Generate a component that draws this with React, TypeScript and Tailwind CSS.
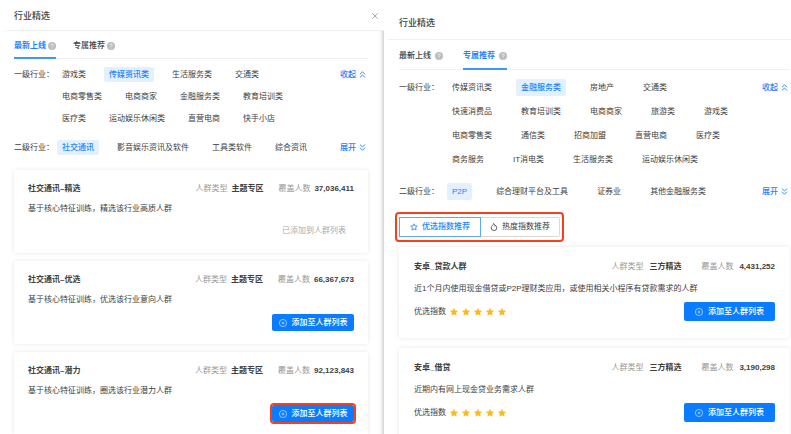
import React from 'react';
import { ChevronsDown, ChevronsUp, X } from 'lucide-react';

type Row = string[];

const newCards = [
  { name: '社交通讯–精选', desc: '基于核心特征训练，精选该行业高质人群', count: '37,036,411', added: true },
  { name: '社交通讯–优选', desc: '基于核心特征训练，优选该行业意向人群', count: '66,367,673' },
  { name: '社交通讯–潜力', desc: '基于核心特征训练，圈选该行业潜力人群', count: '92,123,843', marked: true },
];

const exclusiveCards = [
  { name: '安卓_贷款人群', desc: '近1个月内使用现金借贷或P2P理财类应用，或使用相关小程序有贷款需求的人群', count: '4,431,252' },
  { name: '安卓_借贷', desc: '近期内有网上现金贷业务需求人群', count: '3,190,298' },
];

const HelpIcon = () => (
  <svg viewBox="0 0 16 16" className="size-2 shrink-0" aria-hidden="true">
    <circle cx="8" cy="8" r="8" fill="#bdbdbd" />
    <path d="M5.7 6.4a2.3 2.3 0 1 1 3.4 2c-.8.4-1.1.8-1.1 1.5" fill="none" stroke="#fff" strokeWidth="1.4" />
    <circle cx="8" cy="12" r="0.9" fill="#fff" />
  </svg>
);

const AddIcon = () => (
  <svg viewBox="0 0 16 16" className="size-2 shrink-0" fill="none" stroke="#fff" aria-hidden="true">
    <circle cx="8" cy="8" r="7.2" strokeWidth="1.1" />
    <path d="M5.2 8h5.6M8 5.2v5.6" strokeWidth="1.1" />
  </svg>
);

const StarIcon = () => (
  <svg viewBox="0 0 16 16" className="size-2" fill="#fbb91c" stroke="#fbb91c" strokeLinejoin="round" aria-hidden="true">
    <path d="M8 .9l2.2 4.500 5 .6-3.700 3.400 1 5L8 12l-4.500 2.400 1-5L.8 6l5-.6z" />
  </svg>
);

const Tab = ({ label, active, wide }: { label: string; active?: boolean; wide?: boolean }) => (
  <button
    role="tab"
    aria-selected={!!active}
    className={`-mb-px flex items-center border-b-2 pt-[3px] ${wide ? 'h-[30px] gap-1' : 'h-[28px] gap-[2px]'} ${
      active ? 'border-[#3d97ff] font-bold text-[#1a84ff]' : 'border-transparent font-medium'
    }`}
  >
    {label}
    <HelpIcon />
  </button>
);

type FilterProps = { label: string; rows: Row[]; active: string; open?: boolean; wide?: boolean };

const Filter = ({ label, rows, active, open, wide }: FilterProps) => (
  <div className="flex items-start">
    <span className={`shrink-0 ${wide ? 'w-12 leading-[17px]' : 'w-[43px] leading-[15px]'}`}>{label}：</span>
    <div className="flex flex-1 flex-col gap-[7px]">
      {rows.map((row) => (
        <div key={row[0]} className={`flex ${wide ? 'gap-[19px]' : 'gap-[13px]'}`}>
          {row.map((item) => (
            <button
              key={item}
              className={`rounded-[2px] px-[5px] whitespace-nowrap ${wide ? 'h-[17px]' : 'h-[15px]'} ${
                item === active ? 'bg-[#e3f1ff] font-medium text-[#1a84ff]' : ''
              }`}
            >
              {item}
            </button>
          ))}
        </div>
      ))}
    </div>
    <button className={`flex shrink-0 items-center gap-px font-medium text-[#1a84ff] ${wide ? 'h-[17px]' : 'h-[15px]'}`}>
      {open ? '收起' : '展开'}
      {open ? <ChevronsUp size={11} strokeWidth={2} /> : <ChevronsDown size={11} strokeWidth={2} />}
    </button>
  </div>
);

const AddButton = ({ wide }: { wide?: boolean }) => (
  <button
    className={`flex items-center justify-center gap-[5px] rounded-[2px] bg-[#0a7cff] font-medium text-white ${
      wide ? 'h-[19px] w-[91px]' : 'h-[17px] w-[82px]'
    }`}
  >
    <AddIcon />
    添加至人群列表
  </button>
);

const Meta = ({ type, count, wide }: { type: string; count: string; wide?: boolean }) => (
  <dl className="flex whitespace-nowrap">
    <dt className={`text-[#999] ${wide ? 'mr-[6px]' : 'mr-1'}`}>人群类型</dt>
    <dd className={`font-bold ${wide ? 'mr-5' : 'mr-[15px]'}`}>{type}</dd>
    <dt className={`text-[#999] ${wide ? 'mr-[6px]' : 'mr-1'}`}>覆盖人数</dt>
    <dd className="font-bold">{count}</dd>
  </dl>
);

const App = () => {
  return (
    <main className="grid h-screen grid-cols-[384fr_407fr] overflow-hidden bg-white font-['Liberation_Sans','Noto_Sans_CJK_SC',sans-serif] text-[8px] leading-3 text-[#404040]">
      <section className="flex min-w-0 flex-col">
        <header className="ml-[7px] flex h-[31px] shrink-0 items-center justify-between border-b border-[#f0f0f0] pt-px pr-1 pl-[7px]">
          <h2 className="text-[9px] font-medium">行业精选</h2>
          <button aria-label="关闭" className="text-[#999]">
            <X size={10} strokeWidth={2} />
          </button>
        </header>
        <div className="flex-1 pr-4 pl-[14px] shadow-[inset_-4px_0_4px_-3px_rgba(0,0,0,0.25)]">
          <div role="tablist" className="flex gap-[17px] border-b border-[#f0f0f0]">
            <Tab label="最新上线" active />
            <Tab label="专属推荐" />
          </div>
          <div className="flex flex-col gap-[14px] pt-2">
            <Filter
              label="一级行业"
              active="传媒资讯类"
              open
              rows={[
                ['游戏类', '传媒资讯类', '生活服务类', '交通类'],
                ['电商零售类', '电商商家', '金融服务类', '教育培训类'],
                ['医疗类', '运动娱乐休闲类', '直营电商', '快手小店'],
              ]}
            />
            <Filter label="二级行业" active="社交通讯" rows={[['社交通讯', '影音娱乐资讯及软件', '工具类软件', '综合资讯']]} />
          </div>
          <div className="mt-[15px] flex flex-col gap-2">
            {newCards.map((card) => (
              <article key={card.name} className="h-[83px] rounded-[2px] px-[14px] pt-[13px] shadow-[0_0_4px_rgba(0,0,0,0.1)]">
                <div className="flex justify-between">
                  <h3 className="font-bold">{card.name}</h3>
                  <Meta type="主题专区" count={card.count} />
                </div>
                <p className="mt-2">{card.desc}</p>
                <div className="mt-2 flex justify-end">
                  {card.added ? (
                    <span className="pr-2 leading-[15px] text-[#aaa]">已添加到人群列表</span>
                  ) : (
                    <div className={card.marked ? 'rounded-[2px] outline-2 outline-[#f5401e]' : ''}>
                      <AddButton />
                    </div>
                  )}
                </div>
              </article>
            ))}
          </div>
        </div>
      </section>

      <section className="min-w-0">
        <header className="ml-1 flex h-10 items-center border-b border-[#f0f0f0] pt-[6px] pl-[11px]">
          <h2 className="text-[9px] font-medium">行业精选</h2>
        </header>
        <div className="pr-px pl-[15px]">
          <div role="tablist" className="flex gap-5 border-b border-[#f0f0f0]">
            <Tab label="最新上线" wide />
            <Tab label="专属推荐" active wide />
          </div>
          <div className="flex flex-col gap-[15px] pt-[9px]">
            <Filter
              label="一级行业"
              active="金融服务类"
              open
              wide
              rows={[
                ['传媒资讯类', '金融服务类', '房地产', '交通类'],
                ['快速消费品', '教育培训类', '电商商家', '旅游类', '游戏类'],
                ['电商零售类', '通信类', '招商加盟', '直营电商', '医疗类'],
                ['商务服务', 'IT消电类', '生活服务类', '运动娱乐休闲类'],
              ]}
            />
            <Filter label="二级行业" active="P2P" wide rows={[['P2P', '综合理财平台及工具', '证券业', '其他金融服务类']]} />
          </div>
          <div className="mt-3 -ml-1 flex w-fit rounded-[4px] border-2 border-[#f5401e] px-[2px] py-[3px]">
            <button className="flex h-5 w-[82px] items-center justify-center gap-1 border border-[#5aa8ff] font-medium text-[#1a84ff]">
              <svg viewBox="0 0 16 16" className="size-2" fill="none" stroke="currentColor" strokeWidth="1.6" aria-hidden="true">
                <path d="M8 1.5l2 4.2 4.6.6-3.4 3.1.9 4.6L8 11.8 3.900 14l.9-4.600-3.400-3.100 4.600-.6z" />
              </svg>
              优选指数推荐
            </button>
            <button className="flex h-5 w-[79px] items-center justify-center gap-1 rounded-r-[2px] border border-l-0 border-[#d9d9d9]">
              <svg viewBox="0 0 16 16" className="size-2" fill="none" stroke="currentColor" strokeWidth="1.6" aria-hidden="true">
                <path d="M7 1c.3 2.600-4.500 4.800-4.500 8.800a5.500 5.300 0 0 0 11 0c0-2.300-1.200-4-2.200-5-.3 1-.8 1.500-1.500 1.800C9.900 4.200 9 2 7 1z" />
              </svg>
              热度指数推荐
            </button>
          </div>
          <div className="mt-[5px] flex flex-col gap-[10px]">
            {exclusiveCards.map((card) => (
              <article key={card.name} className="h-[91px] rounded-[2px] px-[15px] pt-[14px] shadow-[0_0_4px_rgba(0,0,0,0.1)]">
                <div className="flex justify-between">
                  <h3 className="font-bold">{card.name}</h3>
                  <Meta type="三方精选" count={card.count} wide />
                </div>
                <p className="mt-[10px]">{card.desc}</p>
                <div className="mt-[7px] flex items-center justify-between">
                  <div className="flex items-center gap-1">
                    优选指数
                    {[1, 2, 3, 4, 5].map((n) => (
                      <StarIcon key={n} />
                    ))}
                  </div>
                  <AddButton wide />
                </div>
              </article>
            ))}
          </div>
        </div>
      </section>
    </main>
  );
};

export default App;
